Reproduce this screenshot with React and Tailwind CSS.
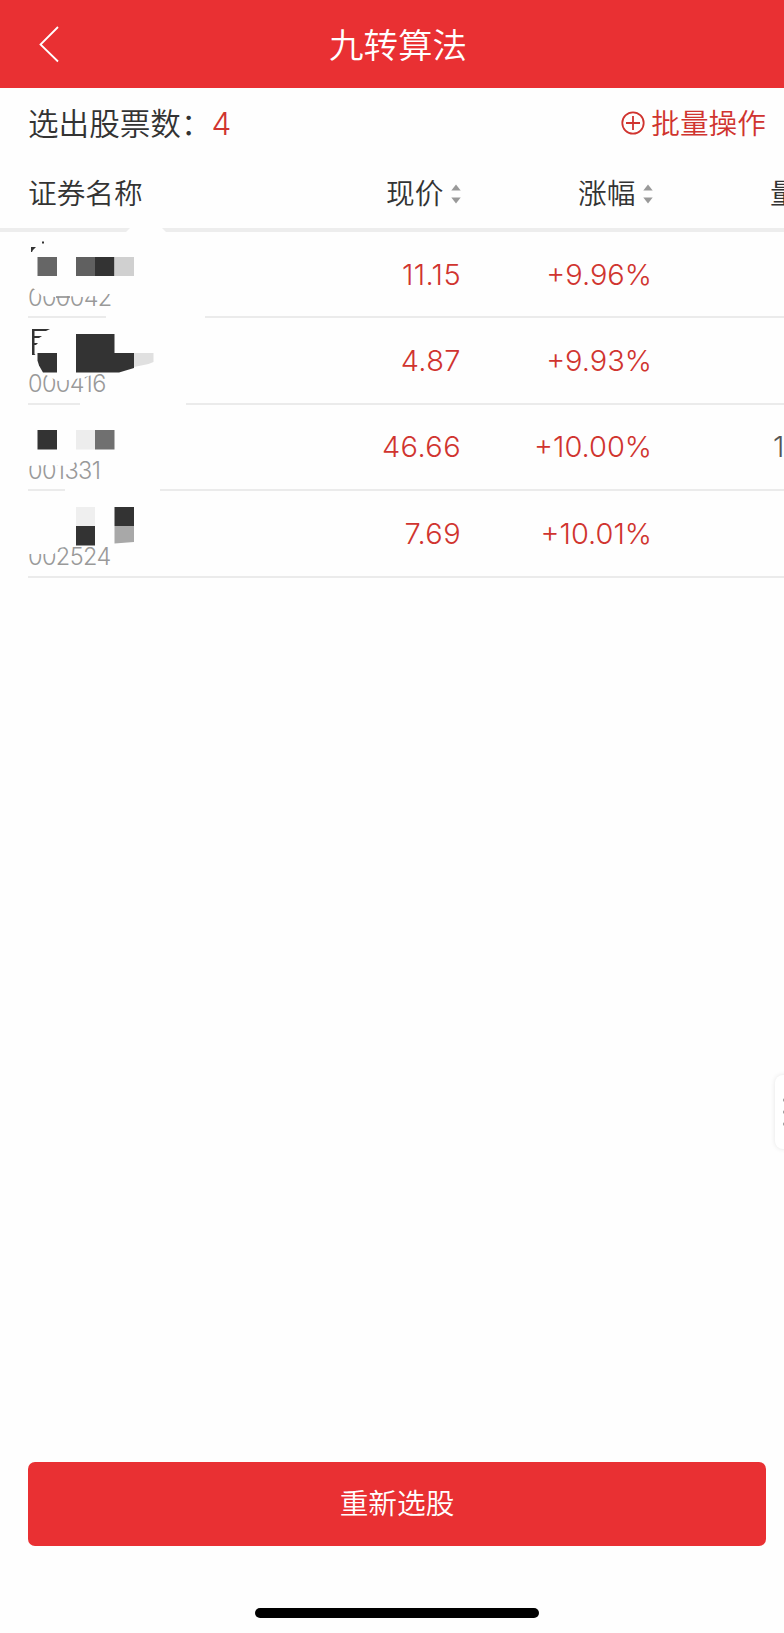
const stocks = [
  { code: "000042", price: "11.15", change: "+9.96%", volume: "" },
  { code: "000416", price: "4.87", change: "+9.93%", volume: "" },
  { code: "001331", price: "46.66", change: "+10.00%", volume: "1" },
  { code: "002524", price: "7.69", change: "+10.01%", volume: "" },
];

const SortIcon = () => (
  <svg width="10" height="20" viewBox="0 0 10 20" fill="#999">
    <path d="M5 .5 9.7 6.5H.3z" />
    <path d="M5 19.5.3 13.5h9.4z" />
  </svg>
);

const PlusCircle = () => (
  <svg
    width="24"
    height="24"
    viewBox="0 0 24 24"
    fill="none"
    stroke="#d0342f"
    strokeWidth="1.8"
    className="-mt-px"
  >
    <circle cx="12" cy="12" r="10.7" />
    <path d="M12 5v14M5 12h14" />
  </svg>
);

// Wiped area and mosaic blocks that hide the stock names
const NameMask = () => (
  <svg
    width="230"
    height="356"
    viewBox="0 224 230 356"
    className="pointer-events-none absolute -top-2 left-0"
  >
    <g fill="#fefefe">
      <path d="M132 226h28l7 7h-42z" />
      <path d="M28 236h150v58H108l-12 2-14 1-14-1-13 1-13-1-9-8h-5z" />
      <path d="M106 312h99v10h-99z" />
      <path d="M28 322h158v50H96l-4 3-10 3-14 2-10 1-8-4-8-4H28z" />
      <path d="M80 398h106v10H80z" />
      <path d="M28 408h132v51H84l-8 3-8 4-20-1-20 1z" />
      <path d="M65 485h95v10H65z" />
      <path d="M28 495h130v51H72l-14 2-4 6H28z" />
    </g>
    <path fill="#8f8f8f" d="M56 296.200h14v1.600H56z" />
    <path fill="#333" d="M31 247h5l-3 3-1 2h-1zM42 241.500h2v2h-2z" />
    <path fill="#666" d="M37.500 257H57v19H37.500z" />
    <path fill="#606060" d="M76 257h19v19H76z" />
    <path fill="#333" d="M95 257h19.500v19H95z" />
    <path fill="#d0d0d0" d="M114.500 257H134v19h-19.500z" />

    <g fill="#333">
      <path d="M32 329h18l-4 2H34.500v5H42l-3 2h-4.500v5H38l-2 2h-1.500v9l1 1h-3.500z" />
      <path d="M37.500 353H57v19.500H43l-4-7-1.500-5z" />
      <path d="M76 334h38.500v19H134v15l-15 4.500H76z" />
    </g>
    <path fill="#e0e0e0" d="M134 353h19.500v9l-5 2-14.500 3z" />

    <path fill="#333" d="M37.500 430H57v19.500H37.500z" />
    <path fill="#ededed" d="M76 430h19v19.500H76z" />
    <path fill="#707070" d="M95 430h19.500v19.500H95z" />

    <path fill="#efefef" d="M76 507h19v19H76z" />
    <path fill="#333" d="M76 526h19v19.500H76zM114.500 507H134v19h-19.500z" />
    <path fill="#a8a8a8" d="M114.500 526H134v16l-19.500 1.500z" />
  </svg>
);

const App = () => {
  return (
    <div className="relative flex h-[1633px] w-[784px] flex-col overflow-hidden bg-[#fefefe] font-['Inter','Noto_Sans_CJK_SC',sans-serif] font-[350] text-[#333]">
      <header className="flex h-[88px] shrink-0 items-center bg-[#e93033] pl-[38px] text-white">
        <svg
          width="22"
          height="38"
          viewBox="0 0 22 38"
          fill="none"
          stroke="#fff"
          strokeWidth="1.8"
        >
          <path d="M20 2 2.500 19.500 20 36.500" />
        </svg>
        <h1 className="mt-[5px] ml-[269px] text-[34.5px] leading-none whitespace-nowrap">
          九转算法
        </h1>
      </header>

      <div className="flex h-[72px] shrink-0 items-center justify-between pr-[18px] pl-[28px]">
        <p className="flex items-center text-[30.6px] leading-none">
          选出股票数：
          <span className="-mt-px text-[31.5px] text-[#d0342f]">4</span>
        </p>
        <button
          type="button"
          className="flex items-center gap-[6px] text-[28.7px] leading-none text-[#d0342f]"
        >
          <PlusCircle />
          批量操作
        </button>
      </div>

      <div className="flex h-[72px] w-[860px] shrink-0 items-center border-b-4 border-[#ededed] pl-[28px] text-[28.7px] leading-none">
        <span className="w-[358px]">证券名称</span>
        <span className="flex w-[192px] items-center gap-2">
          现价 <SortIcon />
        </span>
        <span className="flex w-[192px] items-center gap-2">
          涨幅 <SortIcon />
        </span>
        <span>量比</span>
      </div>

      <div className="relative w-[860px]">
        <ul className="pl-[28px]">
          {stocks.map((s) => (
            <li
              key={s.code}
              className="flex h-[86.4px] items-center border-b-2 border-[#ebebeb] text-[29px] leading-none"
            >
              <span className="w-[152px] self-end pb-[7px] text-[23.5px] tracking-[-0.6px] text-[#999]">
                {s.code}
              </span>
              <span className="w-[281px] text-right tracking-[0.4px] text-[#d0342f]">
                {s.price}
              </span>
              <span className="w-[191px] text-right text-[#d0342f]">
                {s.change}
              </span>
              <span className="pl-[121px] text-[#555]">{s.volume}</span>
            </li>
          ))}
        </ul>
        <NameMask />
      </div>

      {/* floating drawer handle, half off the right edge */}
      <div className="absolute top-[1075px] left-[775px] flex h-[74px] w-10 flex-col justify-center gap-2 rounded-lg bg-white pl-[8px] shadow-[0_0_5px_rgba(0,0,0,0.1)]">
        <i className="size-1 rounded-full bg-[#999]" />
        <i className="size-1 rounded-full bg-[#999]" />
        <i className="size-1 rounded-full bg-[#999]" />
      </div>

      <footer className="mt-auto flex flex-col items-center pb-[15px]">
        <button
          type="button"
          className="mb-[62px] ml-[28px] h-[84px] w-[738px] self-start rounded-[7px] bg-[#e93033] text-[28.7px] leading-none text-white"
        >
          重新选股
        </button>
        <div className="ml-[10px] h-[10px] w-[284px] rounded-full bg-black" />
      </footer>
    </div>
  );
};

export default App;
